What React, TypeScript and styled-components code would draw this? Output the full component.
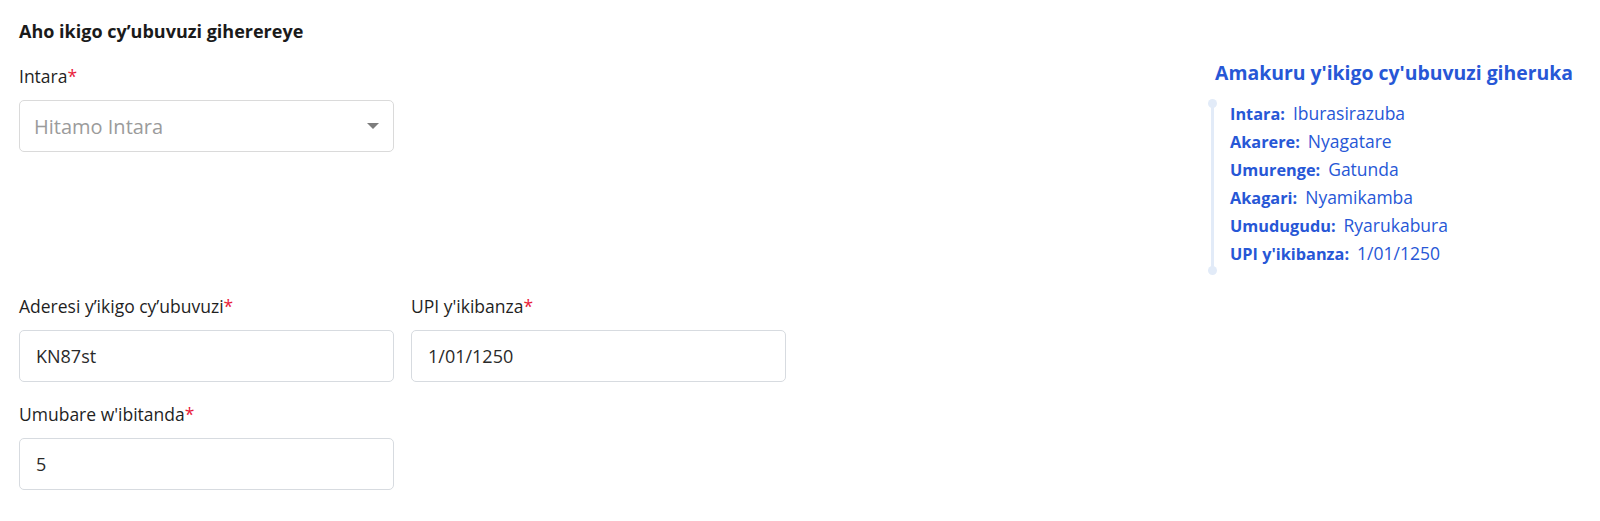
import React from "react";
import styled, { createGlobalStyle } from "styled-components";

const GlobalStyle = createGlobalStyle`
  html, body { margin: 0; padding: 0; background: #ffffff; }
  body { font-family: "Open Sans", "Noto Sans", sans-serif; color: #1f1f1f; }
  * { box-sizing: border-box; }
`;

const Page = styled.div`
  display: flex;
  justify-content: space-between;
  align-items: flex-start;
  padding: 19px 27px 0 19px;
  width: 1600px;
  height: 521px;
`;

const LeftColumn = styled.div`
  display: flex;
  flex-direction: column;
`;

const SectionTitle = styled.h2`
  margin: 0 0 20px;
  font-size: 18px;
  line-height: 25px;
  font-weight: 700;
  color: #1a1a1a;
`;

const Field = styled.div<{ $gapAfter?: number }>`
  display: flex;
  flex-direction: column;
  width: 375px;
  margin-bottom: ${(p) => p.$gapAfter ?? 0}px;
`;

const Label = styled.label`
  font-size: 17.5px;
  line-height: 24px;
  color: #1f1f1f;
  margin-bottom: 12px;
`;

const Required = styled.span`
  color: #e8213b;
`;

const SelectBox = styled.div`
  height: 52px;
  border: 1px solid #dadada;
  border-radius: 5px;
  display: flex;
  align-items: center;
  justify-content: space-between;
  padding: 0 14px 0 14px;
`;

const Placeholder = styled.span`
  font-size: 20px;
  color: #9b9b9b;
`;

const Caret = styled.span`
  width: 0;
  height: 0;
  border-left: 6px solid transparent;
  border-right: 6px solid transparent;
  border-top: 6px solid #7d7d7d;
`;

const Input = styled.input`
  height: 52px;
  border: 1px solid #d7dbe0;
  border-radius: 5px;
  padding: 0 16px;
  font-family: inherit;
  font-size: 18px;
  color: #2a2a2a;
  background: #fff;
  outline: none;
`;

const FieldRow = styled.div`
  display: grid;
  grid-template-columns: 375px 375px;
  column-gap: 17px;
  margin-bottom: 20px;
`;

const SummaryPanel = styled.aside`
  margin-top: 42px;
  display: flex;
  flex-direction: column;
`;

const SummaryTitle = styled.h3`
  margin: 0 0 14px;
  font-size: 19.4px;
  line-height: 24px;
  font-weight: 700;
  color: #2757d6;
`;

const SummaryList = styled.dl`
  position: relative;
  margin: 0 0 0 -1px;
  padding: 0 0 4px 16px;
  &::before {
    content: "";
    position: absolute;
    left: -3px;
    top: 3px;
    bottom: 0;
    width: 3px;
    background: #e2ebf8;
  }
  &::after {
    content: "";
    position: absolute;
    left: -6px;
    bottom: -4px;
    width: 9px;
    height: 9px;
    border-radius: 50%;
    background: #e2ebf8;
  }
`;

const TopDot = styled.span`
  position: absolute;
  left: -6px;
  top: 0;
  width: 9px;
  height: 9px;
  border-radius: 50%;
  background: #e2ebf8;
`;

const SummaryRow = styled.div`
  display: flex;
  align-items: baseline;
  gap: 8px;
  height: 28px;
  line-height: 28px;
  color: #2757d6;
`;

const Term = styled.dt`
  font-size: 16.3px;
  line-height: 28px;
  font-weight: 700;
`;

const Value = styled.dd`
  margin: 0;
  font-size: 17.5px;
  line-height: 28px;
`;

const summary: [string, string][] = [
  ["Intara:", "Iburasirazuba"],
  ["Akarere:", "Nyagatare"],
  ["Umurenge:", "Gatunda"],
  ["Akagari:", "Nyamikamba"],
  ["Umudugudu:", "Ryarukabura"],
  ["UPI y'ikibanza:", "1/01/1250"],
];

export default function App() {
  return (
    <>
      <GlobalStyle />
      <Page>
        <LeftColumn>
          <SectionTitle>Aho ikigo cy’ubuvuzi giherereye</SectionTitle>
          <Field $gapAfter={142}>
            <Label>
              Intara<Required>*</Required>
            </Label>
            <SelectBox>
              <Placeholder>Hitamo Intara</Placeholder>
              <Caret />
            </SelectBox>
          </Field>
          <FieldRow>
            <Field>
              <Label>
                Aderesi y’ikigo cy’ubuvuzi<Required>*</Required>
              </Label>
              <Input defaultValue="KN87st" />
            </Field>
            <Field>
              <Label>
                UPI y'ikibanza<Required>*</Required>
              </Label>
              <Input defaultValue="1/01/1250" />
            </Field>
          </FieldRow>
          <Field>
            <Label>
              Umubare w'ibitanda<Required>*</Required>
            </Label>
            <Input defaultValue="5" />
          </Field>
        </LeftColumn>
        <SummaryPanel>
          <SummaryTitle>Amakuru y'ikigo cy'ubuvuzi giheruka</SummaryTitle>
          <SummaryList>
            <TopDot />
            {summary.map(([k, v]) => (
              <SummaryRow key={k}>
                <Term>{k}</Term>
                <Value>{v}</Value>
              </SummaryRow>
            ))}
          </SummaryList>
        </SummaryPanel>
      </Page>
    </>
  );
}
